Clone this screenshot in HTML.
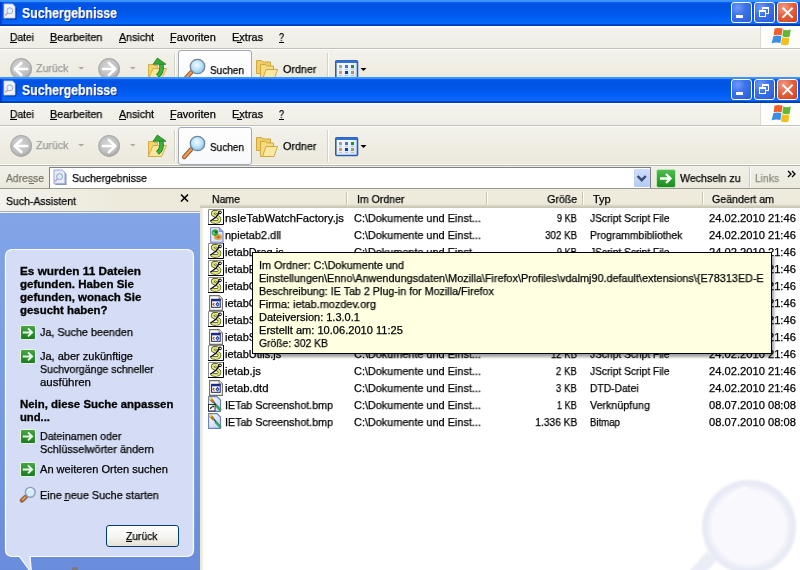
<!DOCTYPE html><html><head><meta charset="utf-8"><style>
html,body{margin:0;padding:0;width:800px;height:570px;overflow:hidden;background:#fff;position:relative}
.t{position:absolute;white-space:nowrap;font-family:"Liberation Sans",sans-serif;line-height:normal;-webkit-text-stroke:0.25px currentColor;will-change:transform}
svg{overflow:visible}
</style></head><body>
<div style="position:absolute;left:0;top:0px;width:800px;height:77px;overflow:hidden"><div style="position:absolute;left:0px;top:0px;width:800px;height:26px;background:linear-gradient(#3d95ff 0px,#3890fc 1.5px,#0a5ff0 2.5px,#0052e2 4px,#0055e6 10px,#005cf2 16px,#0564f8 21px,#0a6af8 23.5px,#0046c4 24.5px,#0038b0 26px);"></div><div style="position:absolute;left:0px;top:2px;width:3px;height:23px;background:linear-gradient(90deg,#0032c8,rgba(0,60,220,0));"></div><svg style="position:absolute;left:3px;top:3px" width="16" height="17" viewBox="0 0 16 17"><path d="M2.5 2h8.5l2.5 2.5V16.5H2.5z" fill="#001660" opacity=".55"/><path d="M1 1h8.5l2.5 2.5V15H1z" fill="#f0f2fd" stroke="#c4cbef" stroke-width=".8"/><circle cx="6.8" cy="7.8" r="3" fill="#e2f3fb" stroke="#9aa4c4" stroke-width=".9"/><path d="M4.6 10L2.2 12.6" stroke="#d4a0a0" stroke-width="1.5"/></svg><div class="t" style="left:22px;top:5px;font-size:14px;font-weight:bold;color:#fff;transform:scaleX(0.8787);transform-origin:left 0;text-shadow:1px 1px 0 #0a1e88;">Suchergebnisse</div><div style="position:absolute;left:731px;top:2px;width:21px;height:21px;box-sizing:border-box;border:1px solid #fff;border-radius:3px;background:radial-gradient(circle at 30% 25%,#6f9bf7 0,#3c72ea 40%,#2f63dd 80%,#2a56cc 100%);"></div><div style="position:absolute;left:754px;top:2px;width:21px;height:21px;box-sizing:border-box;border:1px solid #fff;border-radius:3px;background:radial-gradient(circle at 30% 25%,#6f9bf7 0,#3c72ea 40%,#2f63dd 80%,#2a56cc 100%);"></div><div style="position:absolute;left:777px;top:2px;width:21px;height:21px;box-sizing:border-box;border:1px solid #fff;border-radius:3px;background:radial-gradient(circle at 30% 25%,#f39a82 0,#e3623f 45%,#d24a26 85%,#c13b1a 100%);"></div><div style="position:absolute;left:736px;top:15px;width:7px;height:3px;background:#fff;"></div><svg style="position:absolute;left:754px;top:2px" width="21" height="21" viewBox="0 0 21 21"><g fill="#fff" shape-rendering="crispEdges"><rect x="8" y="5" width="7" height="2"/><rect x="14" y="7" width="1" height="5"/><rect x="12" y="11" width="2" height="1"/><rect x="8" y="7" width="1" height="1"/><rect x="5" y="8" width="7" height="2"/><rect x="5" y="10" width="1" height="5"/><rect x="11" y="10" width="1" height="5"/><rect x="5" y="14" width="7" height="1"/></g></svg><svg style="position:absolute;left:777px;top:2px" width="21" height="21" viewBox="0 0 21 21"><path d="M5.6 5.8l10 9.8M15.6 5.8l-10 9.8" stroke="#fff" stroke-width="1.9"/></svg><div style="position:absolute;left:0px;top:26px;width:800px;height:22px;background:linear-gradient(#ffffff 0,#ffffff 1px,#f3f2ec 2px,#efeee6);"></div><div style="position:absolute;left:0px;top:48px;width:800px;height:1px;background:#c5c3b8;"></div><div style="position:absolute;left:0px;top:49px;width:800px;height:1px;background:#fff;"></div><div style="position:absolute;left:761px;top:26px;width:39px;height:22px;background:#fdfdfb;"></div><div style="position:absolute;left:760px;top:26px;width:1px;height:22px;background:#dcdad0;"></div><div class="t" style="left:10px;top:31px;font-size:11px;color:#000;transform:scaleX(0.9343);transform-origin:left 0;">Datei</div><div style="position:absolute;left:10px;top:42px;width:7px;height:1px;background:#000;"></div><div class="t" style="left:50px;top:31px;font-size:11px;color:#000;transform:scaleX(0.9859);transform-origin:left 0;">Bearbeiten</div><div style="position:absolute;left:50px;top:42px;width:7px;height:1px;background:#000;"></div><div class="t" style="left:118.5px;top:31px;font-size:11px;color:#000;transform:scaleX(0.9697);transform-origin:left 0;">Ansicht</div><div style="position:absolute;left:118.5px;top:42px;width:7px;height:1px;background:#000;"></div><div class="t" style="left:170px;top:31px;font-size:11px;color:#000;">Favoriten</div><div style="position:absolute;left:170px;top:42px;width:6px;height:1px;background:#000;"></div><div class="t" style="left:231.5px;top:31px;font-size:11px;color:#000;transform:scaleX(0.9940);transform-origin:left 0;">Extras</div><div style="position:absolute;left:237px;top:42px;width:5px;height:1px;background:#000;"></div><div class="t" style="left:278.5px;top:31px;font-size:11px;color:#000;transform:scaleX(0.8163);transform-origin:left 0;">?</div><div style="position:absolute;left:278.5px;top:42px;width:5px;height:1px;background:#000;"></div><svg style="position:absolute;left:770px;top:27px" width="22" height="20" viewBox="0 0 22 20"><path d="M4.6 1.4 Q8.5 0.3 12.6 1.6 L11.6 8.3 Q7.5 7.1 3.6 8.3Z" fill="#f0602a"/><path d="M13.3 2.6 Q16.8 3.9 20.8 2.4 L19.6 9.8 Q15.8 11 12.3 9.3Z" fill="#62b834"/><path d="M3.4 9.2 Q7.4 7.9 11.4 9.2 L10.4 16 Q6.2 14.8 1.6 16.2Z" fill="#3b8ee6"/><path d="M12.1 10.2 Q15.6 11.6 19.4 10.5 L18.4 17.8 Q14.4 18.9 10.8 17.2Z" fill="#f2c01e"/></svg><div style="position:absolute;left:0px;top:50px;width:800px;height:38px;background:linear-gradient(#f3f2eb,#efede3 50%,#ebe9dc);"></div><div style="position:absolute;left:0px;top:87px;width:800px;height:1px;background:#fbfaf6;"></div><div style="position:absolute;left:0px;top:88px;width:800px;height:1px;background:#b6b4a6;"></div><svg style="position:absolute;left:10px;top:58px" width="23" height="23" viewBox="0 0 23 23"><defs><radialGradient id="g0" cx="45%" cy="40%" r="60%"><stop offset="0" stop-color="#d6d6d6"/><stop offset=".75" stop-color="#bdbdbd"/><stop offset="1" stop-color="#a2a2a2"/></radialGradient></defs><circle cx="11.1" cy="10.9" r="10.8" fill="url(#g0)"/><circle cx="11.1" cy="10.9" r="10.3" fill="none" stroke="#a9a9a9" stroke-width="1"/><path d="M17.2 11H5.5M11.3 5L4.8 11l6.5 6" fill="none" stroke="#fff" stroke-width="2.6" stroke-linecap="round" stroke-linejoin="round"/></svg><div class="t" style="left:36px;top:62px;font-size:11px;color:#9c9c98;transform:scaleX(0.9665);transform-origin:left 0;">Zurück</div><svg style="position:absolute;left:77px;top:66px" width="8" height="5" viewBox="0 0 8 5"><path d="M1.2 1h6L4.2 3.6z" fill="#a8a8a4"/></svg><svg style="position:absolute;left:98px;top:58px" width="23" height="23" viewBox="0 0 23 23"><defs><radialGradient id="g1000" cx="45%" cy="40%" r="60%"><stop offset="0" stop-color="#d6d6d6"/><stop offset=".75" stop-color="#bdbdbd"/><stop offset="1" stop-color="#a2a2a2"/></radialGradient></defs><circle cx="11.1" cy="10.9" r="10.8" fill="url(#g1000)"/><circle cx="11.1" cy="10.9" r="10.3" fill="none" stroke="#a9a9a9" stroke-width="1"/><path d="M5 11H16.7M10.9 5L17.4 11l-6.5 6" fill="none" stroke="#fff" stroke-width="2.6" stroke-linecap="round" stroke-linejoin="round"/></svg><svg style="position:absolute;left:129px;top:66px" width="8" height="5" viewBox="0 0 8 5"><path d="M1 1h5.5L3.8 3.6z" fill="#a8a8a4"/></svg><svg style="position:absolute;left:144px;top:53px" width="26" height="30" viewBox="0 0 26 30"><path d="M4.5 11.5h4.5l1 1h3.5v14h-9z" fill="#f2d467" stroke="#d0a845" stroke-width=".9"/><path d="M4.2 26.5L9 15.5H22.5L17.5 26.5Z" fill="#fbe79a" stroke="#d0a845" stroke-width=".9"/><path d="M17.2 11 C18.3 16 17.5 20 13.5 23" fill="none" stroke="#1f7f1f" stroke-width="4.6"/><path d="M17.2 11 C18.3 16 17.5 20 13.5 23" fill="none" stroke="#3fb23f" stroke-width="2.8"/><path d="M9 11.3L13.4 5L22 11.3Z" fill="#36a636" stroke="#1f7f1f" stroke-width=".8"/></svg><div style="position:absolute;left:174px;top:53px;width:1px;height:32px;background:#d4d2c6;"></div><div style="position:absolute;left:175px;top:53px;width:1px;height:32px;background:#fff;"></div><div style="position:absolute;left:178px;top:50px;width:74px;height:38px;box-sizing:border-box;border:1px solid #a2a9b6;border-radius:3px;background:linear-gradient(#fefefe,#f8f9fb);"></div><svg style="position:absolute;left:181px;top:57px" width="26" height="26" viewBox="0 0 26 26"><defs><radialGradient id="mg0" cx="45%" cy="40%" r="60%"><stop offset="0" stop-color="#f2fbff"/><stop offset=".6" stop-color="#b8e2f8"/><stop offset="1" stop-color="#8cc4ea"/></radialGradient></defs><path d="M10 15.5L3.2 23" stroke="#9a5a2a" stroke-width="4.4" stroke-linecap="round"/><path d="M10 15.5L3.2 23" stroke="#e9a060" stroke-width="2.2" stroke-linecap="round"/><circle cx="16.5" cy="9.5" r="7.2" fill="url(#mg0)" stroke="#6f8399" stroke-width="1.3"/></svg><div class="t" style="left:210px;top:63.599999999999994px;font-size:11px;color:#000;transform:scaleX(0.9105);transform-origin:left 0;">Suchen</div><svg style="position:absolute;left:254px;top:57px" width="26" height="26" viewBox="0 0 26 26"><path d="M2.5 3.5h5l1.5 1.5h7.5v11.5h-14z" fill="#efcf60" stroke="#caa23a" stroke-width=".9"/><path d="M6.5 7.5h5l1.5 1.5h6.5v13.5h-13z" fill="#f6dc80" stroke="#caa23a" stroke-width=".9"/><path d="M8.5 22.5L12 12.5H23.5L20 22.5Z" fill="#fbe9a2" stroke="#caa23a" stroke-width=".9"/></svg><div class="t" style="left:282.5px;top:63px;font-size:11px;color:#000;transform:scaleX(0.9781);transform-origin:left 0;">Ordner</div><div style="position:absolute;left:327px;top:53px;width:1px;height:32px;background:#d4d2c6;"></div><div style="position:absolute;left:328px;top:53px;width:1px;height:32px;background:#fff;"></div><svg style="position:absolute;left:335px;top:60px" width="24" height="20" viewBox="0 0 24 20"><defs><linearGradient id="vg0" x1="0" y1="0" x2="1" y2="1"><stop offset="0" stop-color="#ffffff"/><stop offset="1" stop-color="#cfe2fb"/></linearGradient></defs><rect x="0.8" y="0.8" width="21.7" height="17.7" rx="1" fill="url(#vg0)" stroke="#2b5cb6" stroke-width="1.6"/><rect x="0.8" y="0.5" width="21.7" height="2.5" fill="#3570d0"/><rect x="4" y="5" width="3" height="3" fill="#9aa4b0"/><rect x="10" y="5" width="3" height="3" fill="#4f74b8"/><rect x="16" y="5" width="3" height="3" fill="#2a8a3a"/><rect x="4" y="11" width="3" height="3" fill="#e0905a"/><rect x="10" y="11" width="3" height="3" fill="#1a3a8a"/><rect x="16" y="11" width="3" height="3" fill="#b09a48"/><path d="M4 9.3h3M10 9.3h3M16 9.3h3M4 15.5h3M10 15.5h3M16 15.5h3" stroke="#b0b4c4" stroke-width=".8"/></svg><svg style="position:absolute;left:360px;top:68px" width="7" height="4" viewBox="0 0 7 4"><path d="M0.5 0h6L3.5 3z" fill="#000"/></svg></div>
<div style="position:absolute;left:0;top:77px;width:800px;height:89px;overflow:hidden"><div style="position:absolute;left:0px;top:0px;width:800px;height:26px;background:linear-gradient(#3d95ff 0px,#3890fc 1.5px,#0a5ff0 2.5px,#0052e2 4px,#0055e6 10px,#005cf2 16px,#0564f8 21px,#0a6af8 23.5px,#0046c4 24.5px,#0038b0 26px);"></div><div style="position:absolute;left:0px;top:2px;width:3px;height:23px;background:linear-gradient(90deg,#0032c8,rgba(0,60,220,0));"></div><svg style="position:absolute;left:3px;top:3px" width="16" height="17" viewBox="0 0 16 17"><path d="M2.5 2h8.5l2.5 2.5V16.5H2.5z" fill="#001660" opacity=".55"/><path d="M1 1h8.5l2.5 2.5V15H1z" fill="#f0f2fd" stroke="#c4cbef" stroke-width=".8"/><circle cx="6.8" cy="7.8" r="3" fill="#e2f3fb" stroke="#9aa4c4" stroke-width=".9"/><path d="M4.6 10L2.2 12.6" stroke="#d4a0a0" stroke-width="1.5"/></svg><div class="t" style="left:22px;top:5px;font-size:14px;font-weight:bold;color:#fff;transform:scaleX(0.8787);transform-origin:left 0;text-shadow:1px 1px 0 #0a1e88;">Suchergebnisse</div><div style="position:absolute;left:731px;top:2px;width:21px;height:21px;box-sizing:border-box;border:1px solid #fff;border-radius:3px;background:radial-gradient(circle at 30% 25%,#6f9bf7 0,#3c72ea 40%,#2f63dd 80%,#2a56cc 100%);"></div><div style="position:absolute;left:754px;top:2px;width:21px;height:21px;box-sizing:border-box;border:1px solid #fff;border-radius:3px;background:radial-gradient(circle at 30% 25%,#6f9bf7 0,#3c72ea 40%,#2f63dd 80%,#2a56cc 100%);"></div><div style="position:absolute;left:777px;top:2px;width:21px;height:21px;box-sizing:border-box;border:1px solid #fff;border-radius:3px;background:radial-gradient(circle at 30% 25%,#f39a82 0,#e3623f 45%,#d24a26 85%,#c13b1a 100%);"></div><div style="position:absolute;left:736px;top:15px;width:7px;height:3px;background:#fff;"></div><svg style="position:absolute;left:754px;top:2px" width="21" height="21" viewBox="0 0 21 21"><g fill="#fff" shape-rendering="crispEdges"><rect x="8" y="5" width="7" height="2"/><rect x="14" y="7" width="1" height="5"/><rect x="12" y="11" width="2" height="1"/><rect x="8" y="7" width="1" height="1"/><rect x="5" y="8" width="7" height="2"/><rect x="5" y="10" width="1" height="5"/><rect x="11" y="10" width="1" height="5"/><rect x="5" y="14" width="7" height="1"/></g></svg><svg style="position:absolute;left:777px;top:2px" width="21" height="21" viewBox="0 0 21 21"><path d="M5.6 5.8l10 9.8M15.6 5.8l-10 9.8" stroke="#fff" stroke-width="1.9"/></svg><div style="position:absolute;left:0px;top:26px;width:800px;height:22px;background:linear-gradient(#ffffff 0,#ffffff 1px,#f3f2ec 2px,#efeee6);"></div><div style="position:absolute;left:0px;top:48px;width:800px;height:1px;background:#c5c3b8;"></div><div style="position:absolute;left:0px;top:49px;width:800px;height:1px;background:#fff;"></div><div style="position:absolute;left:761px;top:26px;width:39px;height:22px;background:#fdfdfb;"></div><div style="position:absolute;left:760px;top:26px;width:1px;height:22px;background:#dcdad0;"></div><div class="t" style="left:10px;top:31px;font-size:11px;color:#000;transform:scaleX(0.9343);transform-origin:left 0;">Datei</div><div style="position:absolute;left:10px;top:42px;width:7px;height:1px;background:#000;"></div><div class="t" style="left:50px;top:31px;font-size:11px;color:#000;transform:scaleX(0.9859);transform-origin:left 0;">Bearbeiten</div><div style="position:absolute;left:50px;top:42px;width:7px;height:1px;background:#000;"></div><div class="t" style="left:118.5px;top:31px;font-size:11px;color:#000;transform:scaleX(0.9697);transform-origin:left 0;">Ansicht</div><div style="position:absolute;left:118.5px;top:42px;width:7px;height:1px;background:#000;"></div><div class="t" style="left:170px;top:31px;font-size:11px;color:#000;">Favoriten</div><div style="position:absolute;left:170px;top:42px;width:6px;height:1px;background:#000;"></div><div class="t" style="left:231.5px;top:31px;font-size:11px;color:#000;transform:scaleX(0.9940);transform-origin:left 0;">Extras</div><div style="position:absolute;left:237px;top:42px;width:5px;height:1px;background:#000;"></div><div class="t" style="left:278.5px;top:31px;font-size:11px;color:#000;transform:scaleX(0.8163);transform-origin:left 0;">?</div><div style="position:absolute;left:278.5px;top:42px;width:5px;height:1px;background:#000;"></div><svg style="position:absolute;left:770px;top:27px" width="22" height="20" viewBox="0 0 22 20"><path d="M4.6 1.4 Q8.5 0.3 12.6 1.6 L11.6 8.3 Q7.5 7.1 3.6 8.3Z" fill="#f0602a"/><path d="M13.3 2.6 Q16.8 3.9 20.8 2.4 L19.6 9.8 Q15.8 11 12.3 9.3Z" fill="#62b834"/><path d="M3.4 9.2 Q7.4 7.9 11.4 9.2 L10.4 16 Q6.2 14.8 1.6 16.2Z" fill="#3b8ee6"/><path d="M12.1 10.2 Q15.6 11.6 19.4 10.5 L18.4 17.8 Q14.4 18.9 10.8 17.2Z" fill="#f2c01e"/></svg><div style="position:absolute;left:0px;top:50px;width:800px;height:38px;background:linear-gradient(#f3f2eb,#efede3 50%,#ebe9dc);"></div><div style="position:absolute;left:0px;top:87px;width:800px;height:1px;background:#fbfaf6;"></div><div style="position:absolute;left:0px;top:88px;width:800px;height:1px;background:#b6b4a6;"></div><svg style="position:absolute;left:10px;top:58px" width="23" height="23" viewBox="0 0 23 23"><defs><radialGradient id="g77" cx="45%" cy="40%" r="60%"><stop offset="0" stop-color="#d6d6d6"/><stop offset=".75" stop-color="#bdbdbd"/><stop offset="1" stop-color="#a2a2a2"/></radialGradient></defs><circle cx="11.1" cy="10.9" r="10.8" fill="url(#g77)"/><circle cx="11.1" cy="10.9" r="10.3" fill="none" stroke="#a9a9a9" stroke-width="1"/><path d="M17.2 11H5.5M11.3 5L4.8 11l6.5 6" fill="none" stroke="#fff" stroke-width="2.6" stroke-linecap="round" stroke-linejoin="round"/></svg><div class="t" style="left:36px;top:62px;font-size:11px;color:#9c9c98;transform:scaleX(0.9665);transform-origin:left 0;">Zurück</div><svg style="position:absolute;left:77px;top:66px" width="8" height="5" viewBox="0 0 8 5"><path d="M1.2 1h6L4.2 3.6z" fill="#a8a8a4"/></svg><svg style="position:absolute;left:98px;top:58px" width="23" height="23" viewBox="0 0 23 23"><defs><radialGradient id="g1077" cx="45%" cy="40%" r="60%"><stop offset="0" stop-color="#d6d6d6"/><stop offset=".75" stop-color="#bdbdbd"/><stop offset="1" stop-color="#a2a2a2"/></radialGradient></defs><circle cx="11.1" cy="10.9" r="10.8" fill="url(#g1077)"/><circle cx="11.1" cy="10.9" r="10.3" fill="none" stroke="#a9a9a9" stroke-width="1"/><path d="M5 11H16.7M10.9 5L17.4 11l-6.5 6" fill="none" stroke="#fff" stroke-width="2.6" stroke-linecap="round" stroke-linejoin="round"/></svg><svg style="position:absolute;left:129px;top:66px" width="8" height="5" viewBox="0 0 8 5"><path d="M1 1h5.5L3.8 3.6z" fill="#a8a8a4"/></svg><svg style="position:absolute;left:144px;top:53px" width="26" height="30" viewBox="0 0 26 30"><path d="M4.5 11.5h4.5l1 1h3.5v14h-9z" fill="#f2d467" stroke="#d0a845" stroke-width=".9"/><path d="M4.2 26.5L9 15.5H22.5L17.5 26.5Z" fill="#fbe79a" stroke="#d0a845" stroke-width=".9"/><path d="M17.2 11 C18.3 16 17.5 20 13.5 23" fill="none" stroke="#1f7f1f" stroke-width="4.6"/><path d="M17.2 11 C18.3 16 17.5 20 13.5 23" fill="none" stroke="#3fb23f" stroke-width="2.8"/><path d="M9 11.3L13.4 5L22 11.3Z" fill="#36a636" stroke="#1f7f1f" stroke-width=".8"/></svg><div style="position:absolute;left:174px;top:53px;width:1px;height:32px;background:#d4d2c6;"></div><div style="position:absolute;left:175px;top:53px;width:1px;height:32px;background:#fff;"></div><div style="position:absolute;left:178px;top:50px;width:74px;height:38px;box-sizing:border-box;border:1px solid #a2a9b6;border-radius:3px;background:linear-gradient(#fefefe,#f8f9fb);"></div><svg style="position:absolute;left:181px;top:57px" width="26" height="26" viewBox="0 0 26 26"><defs><radialGradient id="mg77" cx="45%" cy="40%" r="60%"><stop offset="0" stop-color="#f2fbff"/><stop offset=".6" stop-color="#b8e2f8"/><stop offset="1" stop-color="#8cc4ea"/></radialGradient></defs><path d="M10 15.5L3.2 23" stroke="#9a5a2a" stroke-width="4.4" stroke-linecap="round"/><path d="M10 15.5L3.2 23" stroke="#e9a060" stroke-width="2.2" stroke-linecap="round"/><circle cx="16.5" cy="9.5" r="7.2" fill="url(#mg77)" stroke="#6f8399" stroke-width="1.3"/></svg><div class="t" style="left:210px;top:63.599999999999994px;font-size:11px;color:#000;transform:scaleX(0.9105);transform-origin:left 0;">Suchen</div><svg style="position:absolute;left:254px;top:57px" width="26" height="26" viewBox="0 0 26 26"><path d="M2.5 3.5h5l1.5 1.5h7.5v11.5h-14z" fill="#efcf60" stroke="#caa23a" stroke-width=".9"/><path d="M6.5 7.5h5l1.5 1.5h6.5v13.5h-13z" fill="#f6dc80" stroke="#caa23a" stroke-width=".9"/><path d="M8.5 22.5L12 12.5H23.5L20 22.5Z" fill="#fbe9a2" stroke="#caa23a" stroke-width=".9"/></svg><div class="t" style="left:282.5px;top:63px;font-size:11px;color:#000;transform:scaleX(0.9781);transform-origin:left 0;">Ordner</div><div style="position:absolute;left:327px;top:53px;width:1px;height:32px;background:#d4d2c6;"></div><div style="position:absolute;left:328px;top:53px;width:1px;height:32px;background:#fff;"></div><svg style="position:absolute;left:335px;top:60px" width="24" height="20" viewBox="0 0 24 20"><defs><linearGradient id="vg77" x1="0" y1="0" x2="1" y2="1"><stop offset="0" stop-color="#ffffff"/><stop offset="1" stop-color="#cfe2fb"/></linearGradient></defs><rect x="0.8" y="0.8" width="21.7" height="17.7" rx="1" fill="url(#vg77)" stroke="#2b5cb6" stroke-width="1.6"/><rect x="0.8" y="0.5" width="21.7" height="2.5" fill="#3570d0"/><rect x="4" y="5" width="3" height="3" fill="#9aa4b0"/><rect x="10" y="5" width="3" height="3" fill="#4f74b8"/><rect x="16" y="5" width="3" height="3" fill="#2a8a3a"/><rect x="4" y="11" width="3" height="3" fill="#e0905a"/><rect x="10" y="11" width="3" height="3" fill="#1a3a8a"/><rect x="16" y="11" width="3" height="3" fill="#b09a48"/><path d="M4 9.3h3M10 9.3h3M16 9.3h3M4 15.5h3M10 15.5h3M16 15.5h3" stroke="#b0b4c4" stroke-width=".8"/></svg><svg style="position:absolute;left:360px;top:68px" width="7" height="4" viewBox="0 0 7 4"><path d="M0.5 0h6L3.5 3z" fill="#000"/></svg></div>
<div style="position:absolute;left:0px;top:166px;width:800px;height:23px;background:linear-gradient(#f1f0e8,#ebe9dc);"></div>
<div class="t" style="left:6px;top:172px;font-size:11px;color:#76736a;transform:scaleX(0.9412);transform-origin:left 0;">Adresse</div>
<div style="position:absolute;left:29px;top:183px;width:5px;height:1px;background:#76736a;"></div>
<div style="position:absolute;left:49px;top:167px;width:602px;height:22px;box-sizing:border-box;border:1px solid #7c7f88;background:#fff;"></div>
<svg style="position:absolute;left:53px;top:169px" width="15" height="17" viewBox="0 0 15 17"><path d="M2.5 2.2h8.3l2.7 2.7V16H2.5z" fill="#42508a" opacity=".6"/><path d="M1 1h8.3l2.7 2.7V14.8H1z" fill="#e8ecfb" stroke="#8f9ad8" stroke-width=".9"/><circle cx="6.6" cy="7.6" r="3" fill="#d8eefa" stroke="#8a96bc" stroke-width=".9"/><path d="M4.4 9.9L2 12.5" stroke="#c0a0b0" stroke-width="1.5"/></svg>
<div class="t" style="left:72px;top:172px;font-size:11px;color:#000;transform:scaleX(0.9501);transform-origin:left 0;">Suchergebnisse</div>
<div style="position:absolute;left:634px;top:169px;width:16px;height:18px;background:linear-gradient(#cdddfc,#b5cbf5);border-radius:1px;"></div>
<svg style="position:absolute;left:634px;top:169px" width="16" height="18" viewBox="0 0 16 18"><path d="M3.6 7L7.7 11.2L11.8 7" fill="none" stroke="#3d4b72" stroke-width="2.4"/></svg>
<svg style="position:absolute;left:656px;top:169px" width="20" height="19" viewBox="0 0 20 19"><defs><linearGradient id="gg" x1="0" y1="0" x2="0" y2="1"><stop offset="0" stop-color="#4fbf4f"/><stop offset="1" stop-color="#1a8a1e"/></linearGradient></defs><rect x="0.5" y="0.5" width="19" height="18" rx="2" fill="url(#gg)" stroke="#bfe6b8" stroke-width="1"/><path d="M4 9.5h10M10 5l4.5 4.5L10 14" fill="none" stroke="#fff" stroke-width="2.4"/></svg>
<div class="t" style="left:680px;top:172px;font-size:11px;color:#000;transform:scaleX(0.9634);transform-origin:left 0;">Wechseln zu</div>
<div style="position:absolute;left:749px;top:167px;width:1px;height:21px;background:#d0cdbd;"></div>
<div style="position:absolute;left:750px;top:167px;width:1px;height:21px;background:#fff;"></div>
<div class="t" style="left:755px;top:172px;font-size:11px;color:#8c8b84;transform:scaleX(0.9343);transform-origin:left 0;">Links</div>
<svg style="position:absolute;left:787px;top:170px" width="10" height="8" viewBox="0 0 10 8"><path d="M1 1l3 3-3 3M5 1l3 3-3 3" fill="none" stroke="#000" stroke-width="1.3"/></svg>
<div style="position:absolute;left:0px;top:188px;width:800px;height:1px;background:#9c9b92;"></div>
<div style="position:absolute;left:0px;top:189px;width:203px;height:22px;background:linear-gradient(90deg,#f3f2eb,#edeadc 60%);"></div>
<div class="t" style="left:6px;top:195px;font-size:11px;color:#000;transform:scaleX(0.9536);transform-origin:left 0;">Such-Assistent</div>
<svg style="position:absolute;left:179px;top:193px" width="12" height="10" viewBox="0 0 12 10"><path d="M2 1.5l7 7M9 1.5l-7 7" stroke="#000" stroke-width="1.6"/></svg>
<div style="position:absolute;left:0px;top:211px;width:200px;height:1px;background:#a7afbf;"></div>
<div style="position:absolute;left:0px;top:212px;width:200px;height:1px;background:#f4f6fb;"></div>
<div style="position:absolute;left:0px;top:213px;width:200px;height:357px;background:linear-gradient(#82a5e8,#7398e1 60%,#6a8cdc);"></div>
<div style="position:absolute;left:200px;top:189px;width:3px;height:19px;background:#edeadb;"></div>
<div style="position:absolute;left:200px;top:208px;width:3px;height:362px;background:linear-gradient(90deg,#e9e6d4,#f1f0e6);"></div>
<svg style="position:absolute;left:0px;top:240px" width="200" height="330" viewBox="0 0 200 330"><path d="M12.5 9.5 H186.5 Q193.5 9.5 193.5 16.5 V309.5 Q193.5 316.5 186.5 316.5 H30 L31.5 333 L19.5 316.5 H12.5 Q5.5 316.5 5.5 309.5 V16.5 Q5.5 9.5 12.5 9.5Z" fill="#d5ddf6" stroke="#fff" stroke-width="1.2"/></svg>
<div class="t" style="left:19.6px;top:265px;font-size:11px;font-weight:bold;color:#000;transform:scaleX(1.0692);transform-origin:left 0;-webkit-text-stroke:0.3px #000;">Es wurden 11 Dateien</div>
<div class="t" style="left:19.6px;top:278px;font-size:11px;font-weight:bold;color:#000;transform:scaleX(1.0474);transform-origin:left 0;-webkit-text-stroke:0.3px #000;">gefunden. Haben Sie</div>
<div class="t" style="left:19.6px;top:291px;font-size:11px;font-weight:bold;color:#000;transform:scaleX(1.0449);transform-origin:left 0;-webkit-text-stroke:0.3px #000;">gefunden, wonach Sie</div>
<div class="t" style="left:19.6px;top:304px;font-size:11px;font-weight:bold;color:#000;transform:scaleX(1.0382);transform-origin:left 0;-webkit-text-stroke:0.3px #000;">gesucht haben?</div>
<svg style="position:absolute;left:20px;top:325px" width="16" height="15" viewBox="0 0 16 15"><defs><linearGradient id="ga" x1="0" y1="0" x2="0" y2="1"><stop offset="0" stop-color="#4aa64a"/><stop offset="1" stop-color="#1a7a1e"/></linearGradient></defs><rect x="0.5" y="0.5" width="15" height="14" rx="1.5" fill="url(#ga)" stroke="#e8f5e0" stroke-width="1"/><path d="M2.8 7.4h8.6M8 3.4l4 4-4 4" fill="none" stroke="#eaffea" stroke-width="2"/></svg>
<div class="t" style="left:40.4px;top:326px;font-size:11px;color:#000;transform:scaleX(0.9799);transform-origin:left 0;">Ja, Suche beenden</div>
<svg style="position:absolute;left:20px;top:349px" width="16" height="15" viewBox="0 0 16 15"><defs><linearGradient id="ga" x1="0" y1="0" x2="0" y2="1"><stop offset="0" stop-color="#4aa64a"/><stop offset="1" stop-color="#1a7a1e"/></linearGradient></defs><rect x="0.5" y="0.5" width="15" height="14" rx="1.5" fill="url(#ga)" stroke="#e8f5e0" stroke-width="1"/><path d="M2.8 7.4h8.6M8 3.4l4 4-4 4" fill="none" stroke="#eaffea" stroke-width="2"/></svg>
<div class="t" style="left:40.4px;top:349.5px;font-size:11px;color:#000;">Ja, aber zukünftige</div>
<div class="t" style="left:40.4px;top:362.5px;font-size:11px;color:#000;transform:scaleX(0.9628);transform-origin:left 0;">Suchvorgänge schneller</div>
<div class="t" style="left:40.4px;top:375.5px;font-size:11px;color:#000;transform:scaleX(1.0415);transform-origin:left 0;">ausführen</div>
<div class="t" style="left:19.5px;top:398px;font-size:11px;font-weight:bold;color:#000;transform:scaleX(1.0367);transform-origin:left 0;-webkit-text-stroke:0.3px #000;">Nein, diese Suche anpassen</div>
<div class="t" style="left:19.5px;top:411px;font-size:11px;font-weight:bold;color:#000;transform:scaleX(1.0224);transform-origin:left 0;-webkit-text-stroke:0.3px #000;">und...</div>
<svg style="position:absolute;left:20px;top:429px" width="16" height="15" viewBox="0 0 16 15"><defs><linearGradient id="ga" x1="0" y1="0" x2="0" y2="1"><stop offset="0" stop-color="#4aa64a"/><stop offset="1" stop-color="#1a7a1e"/></linearGradient></defs><rect x="0.5" y="0.5" width="15" height="14" rx="1.5" fill="url(#ga)" stroke="#e8f5e0" stroke-width="1"/><path d="M2.8 7.4h8.6M8 3.4l4 4-4 4" fill="none" stroke="#eaffea" stroke-width="2"/></svg>
<div class="t" style="left:40.4px;top:430px;font-size:11px;color:#000;transform:scaleX(0.9652);transform-origin:left 0;">Dateinamen oder</div>
<div class="t" style="left:40.4px;top:443px;font-size:11px;color:#000;transform:scaleX(0.9913);transform-origin:left 0;">Schlüsselwörter ändern</div>
<svg style="position:absolute;left:20px;top:462px" width="16" height="15" viewBox="0 0 16 15"><defs><linearGradient id="ga" x1="0" y1="0" x2="0" y2="1"><stop offset="0" stop-color="#4aa64a"/><stop offset="1" stop-color="#1a7a1e"/></linearGradient></defs><rect x="0.5" y="0.5" width="15" height="14" rx="1.5" fill="url(#ga)" stroke="#e8f5e0" stroke-width="1"/><path d="M2.8 7.4h8.6M8 3.4l4 4-4 4" fill="none" stroke="#eaffea" stroke-width="2"/></svg>
<div class="t" style="left:40.4px;top:463px;font-size:11px;color:#000;transform:scaleX(1.0056);transform-origin:left 0;">An weiteren Orten suchen</div>
<svg style="position:absolute;left:18px;top:486px" width="20" height="18" viewBox="0 0 20 18"><path d="M7.6 11L4 14.4" stroke="#9a6440" stroke-width="4.6" stroke-linecap="round"/><path d="M7.2 11.2L4.6 13.8" stroke="#e0a878" stroke-width="1.6" stroke-linecap="round"/><circle cx="12.3" cy="6.3" r="4.9" fill="#d2eefa" stroke="#8a9cb4" stroke-width="1.4"/><path d="M9.6 4.6 Q11 3 13.4 3.2" fill="none" stroke="#fff" stroke-width="1"/></svg>
<div class="t" style="left:40.4px;top:488.5px;font-size:11px;color:#000;transform:scaleX(0.9868);transform-origin:left 0;">Eine neue Suche starten</div>
<div style="position:absolute;left:64px;top:500px;width:5px;height:1px;background:#000;"></div>
<div style="position:absolute;left:106px;top:525px;width:73px;height:22px;box-sizing:border-box;border:1px solid #003c74;border-radius:3px;background:linear-gradient(#ffffff,#f3f3ee 60%,#e4e2d6);"></div>
<div class="t" style="left:126px;top:529.5px;font-size:11px;color:#000;transform:scaleX(0.9368);transform-origin:left 0;">Zurück</div>
<div style="position:absolute;left:126px;top:541px;width:6px;height:1px;background:#000;"></div>
<div style="position:absolute;left:72px;top:567px;width:6px;height:3px;background:#7a7a80;border-radius:2px 2px 0 0;"></div>
<div style="position:absolute;left:200px;top:189px;width:600px;height:19px;background:linear-gradient(#efecdf 0,#edeadb 15px,#e2decd 16px,#d6d2c2 17px,#cbc7b8 18px);"></div>
<div style="position:absolute;left:346px;top:192px;width:1px;height:13px;background:#c7c5b2;"></div>
<div style="position:absolute;left:347px;top:192px;width:1px;height:13px;background:#fff;"></div>
<div style="position:absolute;left:486px;top:192px;width:1px;height:13px;background:#c7c5b2;"></div>
<div style="position:absolute;left:487px;top:192px;width:1px;height:13px;background:#fff;"></div>
<div style="position:absolute;left:582px;top:192px;width:1px;height:13px;background:#c7c5b2;"></div>
<div style="position:absolute;left:583px;top:192px;width:1px;height:13px;background:#fff;"></div>
<div style="position:absolute;left:702px;top:192px;width:1px;height:13px;background:#c7c5b2;"></div>
<div style="position:absolute;left:703px;top:192px;width:1px;height:13px;background:#fff;"></div>
<div class="t" style="left:212px;top:193px;font-size:11px;color:#000;transform:scaleX(0.9542);transform-origin:left 0;">Name</div>
<div class="t" style="left:357px;top:193px;font-size:11px;color:#000;transform:scaleX(0.9590);transform-origin:left 0;">Im Ordner</div>
<div class="t" style="right:223px;top:193px;font-size:11px;color:#000;transform:scaleX(0.9619);transform-origin:right 0;">Größe</div>
<div class="t" style="left:593px;top:193px;font-size:11px;color:#000;">Typ</div>
<div class="t" style="left:712px;top:193px;font-size:11px;color:#000;transform:scaleX(0.9650);transform-origin:left 0;">Geändert am</div>
<div style="position:absolute;left:203px;top:208px;width:597px;height:362px;background:#fff;"></div>
<div style="position:absolute;left:640px;top:440px;width:160px;height:130px;overflow:hidden"><svg width="160" height="130" style="position:absolute;left:0;top:0;filter:blur(0.8px)"><circle cx="109" cy="87" r="44" fill="#f9f9fd" stroke="#e8eaf5" stroke-width="6"/><circle cx="109" cy="87" r="39.5" fill="none" stroke="#f0f1f9" stroke-width="3"/><path d="M72 116 L50 140" stroke="#eaecf6" stroke-width="13"/><path d="M88 60 Q96 50 108 47" fill="none" stroke="#fbfcff" stroke-width="3"/></svg></div>
<svg style="position:absolute;left:208px;top:209px" width="16" height="16" viewBox="0 0 16 16"><rect x="0" y="0" width="16" height="16" fill="#fff"/><path d="M0.5 15.5V0.5H15" fill="none" stroke="#8a8a8a" stroke-width="1"/><path d="M15.5 0V15.5H0" fill="none" stroke="#000" stroke-width="1"/><path d="M10.5 3.8 C9 2.2 4.6 2.2 4.6 4.8 C4.6 7.4 11.6 6.8 11.6 10.2 C11.6 13.6 5.2 13.6 3.6 11.8" fill="none" stroke="#3a3a10" stroke-width="3.3"/><path d="M10.5 3.8 C9 2.2 4.6 2.2 4.6 4.8 C4.6 7.4 11.6 6.8 11.6 10.2 C11.6 13.6 5.2 13.6 3.6 11.8" fill="none" stroke="#dfe878" stroke-width="2.1"/><path d="M2.2 12.2 L7.6 8.6 L11.4 3.6" fill="none" stroke="#000" stroke-width="1.2"/><circle cx="12" cy="3.4" r="1.4" fill="none" stroke="#000" stroke-width="1"/></svg>
<div class="t" style="left:225.3px;top:211.5px;font-size:11px;color:#000;transform:scaleX(1.0239);transform-origin:left 0;">nsIeTabWatchFactory.js</div>
<div class="t" style="left:354px;top:211.5px;font-size:11px;color:#000;transform:scaleX(0.9883);transform-origin:left 0;">C:\Dokumente und Einst...</div>
<div class="t" style="right:223px;top:211.5px;font-size:11px;color:#000;transform:scaleX(0.8377);transform-origin:right 0;">9 KB</div>
<div class="t" style="left:590px;top:211.5px;font-size:11px;color:#000;transform:scaleX(0.9288);transform-origin:left 0;">JScript Script File</div>
<div class="t" style="left:709px;top:211.5px;font-size:11px;color:#000;transform:scaleX(1.0146);transform-origin:left 0;">24.02.2010 21:46</div>
<svg style="position:absolute;left:210px;top:227px" width="14" height="16" viewBox="0 0 14 16"><defs><linearGradient id="dg" x1="0" y1="0" x2="1" y2="1"><stop offset="0" stop-color="#ffffff"/><stop offset="1" stop-color="#c8d8f8"/></linearGradient></defs><path d="M0.7 0.7h8.5l3.8 3.8v10.8H0.7z" fill="url(#dg)" stroke="#7a82c8" stroke-width="1.1"/><path d="M9.2 0.7v3.8h3.8" fill="#9ab0e0" stroke="#7a82c8" stroke-width=".8"/><ellipse cx="8" cy="10" rx="4" ry="3" fill="#e2a04a"/><ellipse cx="8.2" cy="10.2" rx="1.6" ry="1.1" fill="#b07028"/><circle cx="5" cy="5.6" r="3.3" fill="#3aa84a"/><circle cx="6" cy="5" r="1.5" fill="#1a7028"/><circle cx="3.8" cy="6.2" r="1.1" fill="#7fd07f"/></svg>
<div class="t" style="left:225.3px;top:228.5px;font-size:11px;color:#000;transform:scaleX(0.9945);transform-origin:left 0;">npietab2.dll</div>
<div class="t" style="left:354px;top:228.5px;font-size:11px;color:#000;transform:scaleX(0.9883);transform-origin:left 0;">C:\Dokumente und Einst...</div>
<div class="t" style="right:223px;top:228.5px;font-size:11px;color:#000;transform:scaleX(0.8858);transform-origin:right 0;">302 KB</div>
<div class="t" style="left:590px;top:228.5px;font-size:11px;color:#000;transform:scaleX(0.9444);transform-origin:left 0;">Programmbibliothek</div>
<div class="t" style="left:709px;top:228.5px;font-size:11px;color:#000;transform:scaleX(1.0146);transform-origin:left 0;">24.02.2010 21:46</div>
<svg style="position:absolute;left:208px;top:243px" width="16" height="16" viewBox="0 0 16 16"><rect x="0" y="0" width="16" height="16" fill="#fff"/><path d="M0.5 15.5V0.5H15" fill="none" stroke="#8a8a8a" stroke-width="1"/><path d="M15.5 0V15.5H0" fill="none" stroke="#000" stroke-width="1"/><path d="M10.5 3.8 C9 2.2 4.6 2.2 4.6 4.8 C4.6 7.4 11.6 6.8 11.6 10.2 C11.6 13.6 5.2 13.6 3.6 11.8" fill="none" stroke="#3a3a10" stroke-width="3.3"/><path d="M10.5 3.8 C9 2.2 4.6 2.2 4.6 4.8 C4.6 7.4 11.6 6.8 11.6 10.2 C11.6 13.6 5.2 13.6 3.6 11.8" fill="none" stroke="#dfe878" stroke-width="2.1"/><path d="M2.2 12.2 L7.6 8.6 L11.4 3.6" fill="none" stroke="#000" stroke-width="1.2"/><circle cx="12" cy="3.4" r="1.4" fill="none" stroke="#000" stroke-width="1"/></svg>
<div class="t" style="left:225.3px;top:245.5px;font-size:11px;color:#000;">ietabDrag.js</div>
<div class="t" style="left:354px;top:245.5px;font-size:11px;color:#000;transform:scaleX(0.9883);transform-origin:left 0;">C:\Dokumente und Einst...</div>
<div class="t" style="right:223px;top:245.5px;font-size:11px;color:#000;transform:scaleX(0.8377);transform-origin:right 0;">9 KB</div>
<div class="t" style="left:590px;top:245.5px;font-size:11px;color:#000;transform:scaleX(0.9288);transform-origin:left 0;">JScript Script File</div>
<div class="t" style="left:709px;top:245.5px;font-size:11px;color:#000;transform:scaleX(1.0146);transform-origin:left 0;">24.02.2010 21:46</div>
<svg style="position:absolute;left:208px;top:260px" width="16" height="16" viewBox="0 0 16 16"><rect x="0" y="0" width="16" height="16" fill="#fff"/><path d="M0.5 15.5V0.5H15" fill="none" stroke="#8a8a8a" stroke-width="1"/><path d="M15.5 0V15.5H0" fill="none" stroke="#000" stroke-width="1"/><path d="M10.5 3.8 C9 2.2 4.6 2.2 4.6 4.8 C4.6 7.4 11.6 6.8 11.6 10.2 C11.6 13.6 5.2 13.6 3.6 11.8" fill="none" stroke="#3a3a10" stroke-width="3.3"/><path d="M10.5 3.8 C9 2.2 4.6 2.2 4.6 4.8 C4.6 7.4 11.6 6.8 11.6 10.2 C11.6 13.6 5.2 13.6 3.6 11.8" fill="none" stroke="#dfe878" stroke-width="2.1"/><path d="M2.2 12.2 L7.6 8.6 L11.4 3.6" fill="none" stroke="#000" stroke-width="1.2"/><circle cx="12" cy="3.4" r="1.4" fill="none" stroke="#000" stroke-width="1"/></svg>
<div class="t" style="left:225.3px;top:262.5px;font-size:11px;color:#000;">ietabE.js</div>
<div class="t" style="left:354px;top:262.5px;font-size:11px;color:#000;transform:scaleX(0.9883);transform-origin:left 0;">C:\Dokumente und Einst...</div>
<div class="t" style="right:223px;top:262.5px;font-size:11px;color:#000;transform:scaleX(0.8377);transform-origin:right 0;">9 KB</div>
<div class="t" style="left:590px;top:262.5px;font-size:11px;color:#000;transform:scaleX(0.9288);transform-origin:left 0;">JScript Script File</div>
<div class="t" style="left:709px;top:262.5px;font-size:11px;color:#000;transform:scaleX(1.0146);transform-origin:left 0;">24.02.2010 21:46</div>
<svg style="position:absolute;left:208px;top:277px" width="16" height="16" viewBox="0 0 16 16"><rect x="0" y="0" width="16" height="16" fill="#fff"/><path d="M0.5 15.5V0.5H15" fill="none" stroke="#8a8a8a" stroke-width="1"/><path d="M15.5 0V15.5H0" fill="none" stroke="#000" stroke-width="1"/><path d="M10.5 3.8 C9 2.2 4.6 2.2 4.6 4.8 C4.6 7.4 11.6 6.8 11.6 10.2 C11.6 13.6 5.2 13.6 3.6 11.8" fill="none" stroke="#3a3a10" stroke-width="3.3"/><path d="M10.5 3.8 C9 2.2 4.6 2.2 4.6 4.8 C4.6 7.4 11.6 6.8 11.6 10.2 C11.6 13.6 5.2 13.6 3.6 11.8" fill="none" stroke="#dfe878" stroke-width="2.1"/><path d="M2.2 12.2 L7.6 8.6 L11.4 3.6" fill="none" stroke="#000" stroke-width="1.2"/><circle cx="12" cy="3.4" r="1.4" fill="none" stroke="#000" stroke-width="1"/></svg>
<div class="t" style="left:225.3px;top:279.5px;font-size:11px;color:#000;">ietabC.js</div>
<div class="t" style="left:354px;top:279.5px;font-size:11px;color:#000;transform:scaleX(0.9883);transform-origin:left 0;">C:\Dokumente und Einst...</div>
<div class="t" style="right:223px;top:279.5px;font-size:11px;color:#000;transform:scaleX(0.8377);transform-origin:right 0;">9 KB</div>
<div class="t" style="left:590px;top:279.5px;font-size:11px;color:#000;transform:scaleX(0.9288);transform-origin:left 0;">JScript Script File</div>
<div class="t" style="left:709px;top:279.5px;font-size:11px;color:#000;transform:scaleX(1.0146);transform-origin:left 0;">24.02.2010 21:46</div>
<svg style="position:absolute;left:209px;top:295px" width="14" height="16" viewBox="0 0 14 16"><path d="M0.6 0.6h9.5l3.3 3.3v11.5H0.6z" fill="#fffff8" stroke="#6e6e6e" stroke-width="1.1"/><path d="M10.1 0.6v3.3h3.3" fill="#e8e8e8" stroke="#6e6e6e" stroke-width=".8"/><rect x="2.6" y="4.3" width="8.6" height="8" fill="#fff" stroke="#1a2060" stroke-width="1"/><rect x="2.6" y="4" width="8.6" height="2.3" fill="#1e2a8a"/><path d="M5.5 7.8L4 9.2l1.5 1.4" fill="none" stroke="#9a4a20" stroke-width="1.1"/><path d="M8.5 7.6l1.4 1.6-1.4 1.6-1.4-1.6z" fill="none" stroke="#1f48a8" stroke-width="1.1"/></svg>
<div class="t" style="left:225.3px;top:296.5px;font-size:11px;color:#000;">ietabO.xul</div>
<div class="t" style="left:354px;top:296.5px;font-size:11px;color:#000;transform:scaleX(0.9883);transform-origin:left 0;">C:\Dokumente und Einst...</div>
<div class="t" style="right:223px;top:296.5px;font-size:11px;color:#000;transform:scaleX(0.8377);transform-origin:right 0;">9 KB</div>
<div class="t" style="left:590px;top:296.5px;font-size:11px;color:#000;">XUL-Datei</div>
<div class="t" style="left:709px;top:296.5px;font-size:11px;color:#000;transform:scaleX(1.0146);transform-origin:left 0;">24.02.2010 21:46</div>
<svg style="position:absolute;left:208px;top:311px" width="16" height="16" viewBox="0 0 16 16"><rect x="0" y="0" width="16" height="16" fill="#fff"/><path d="M0.5 15.5V0.5H15" fill="none" stroke="#8a8a8a" stroke-width="1"/><path d="M15.5 0V15.5H0" fill="none" stroke="#000" stroke-width="1"/><path d="M10.5 3.8 C9 2.2 4.6 2.2 4.6 4.8 C4.6 7.4 11.6 6.8 11.6 10.2 C11.6 13.6 5.2 13.6 3.6 11.8" fill="none" stroke="#3a3a10" stroke-width="3.3"/><path d="M10.5 3.8 C9 2.2 4.6 2.2 4.6 4.8 C4.6 7.4 11.6 6.8 11.6 10.2 C11.6 13.6 5.2 13.6 3.6 11.8" fill="none" stroke="#dfe878" stroke-width="2.1"/><path d="M2.2 12.2 L7.6 8.6 L11.4 3.6" fill="none" stroke="#000" stroke-width="1.2"/><circle cx="12" cy="3.4" r="1.4" fill="none" stroke="#000" stroke-width="1"/></svg>
<div class="t" style="left:225.3px;top:313.5px;font-size:11px;color:#000;">ietabS.js</div>
<div class="t" style="left:354px;top:313.5px;font-size:11px;color:#000;transform:scaleX(0.9883);transform-origin:left 0;">C:\Dokumente und Einst...</div>
<div class="t" style="right:223px;top:313.5px;font-size:11px;color:#000;transform:scaleX(0.8377);transform-origin:right 0;">9 KB</div>
<div class="t" style="left:590px;top:313.5px;font-size:11px;color:#000;transform:scaleX(0.9288);transform-origin:left 0;">JScript Script File</div>
<div class="t" style="left:709px;top:313.5px;font-size:11px;color:#000;transform:scaleX(1.0146);transform-origin:left 0;">24.02.2010 21:46</div>
<svg style="position:absolute;left:209px;top:329px" width="14" height="16" viewBox="0 0 14 16"><path d="M0.6 0.6h9.5l3.3 3.3v11.5H0.6z" fill="#fffff8" stroke="#6e6e6e" stroke-width="1.1"/><path d="M10.1 0.6v3.3h3.3" fill="#e8e8e8" stroke="#6e6e6e" stroke-width=".8"/><rect x="2.6" y="4.3" width="8.6" height="8" fill="#fff" stroke="#1a2060" stroke-width="1"/><rect x="2.6" y="4" width="8.6" height="2.3" fill="#1e2a8a"/><path d="M5.5 7.8L4 9.2l1.5 1.4" fill="none" stroke="#9a4a20" stroke-width="1.1"/><path d="M8.5 7.6l1.4 1.6-1.4 1.6-1.4-1.6z" fill="none" stroke="#1f48a8" stroke-width="1.1"/></svg>
<div class="t" style="left:225.3px;top:330.5px;font-size:11px;color:#000;">ietabS.xul</div>
<div class="t" style="left:354px;top:330.5px;font-size:11px;color:#000;transform:scaleX(0.9883);transform-origin:left 0;">C:\Dokumente und Einst...</div>
<div class="t" style="right:223px;top:330.5px;font-size:11px;color:#000;transform:scaleX(0.8377);transform-origin:right 0;">9 KB</div>
<div class="t" style="left:590px;top:330.5px;font-size:11px;color:#000;">XUL-Datei</div>
<div class="t" style="left:709px;top:330.5px;font-size:11px;color:#000;transform:scaleX(1.0146);transform-origin:left 0;">24.02.2010 21:46</div>
<svg style="position:absolute;left:208px;top:345px" width="16" height="16" viewBox="0 0 16 16"><rect x="0" y="0" width="16" height="16" fill="#fff"/><path d="M0.5 15.5V0.5H15" fill="none" stroke="#8a8a8a" stroke-width="1"/><path d="M15.5 0V15.5H0" fill="none" stroke="#000" stroke-width="1"/><path d="M10.5 3.8 C9 2.2 4.6 2.2 4.6 4.8 C4.6 7.4 11.6 6.8 11.6 10.2 C11.6 13.6 5.2 13.6 3.6 11.8" fill="none" stroke="#3a3a10" stroke-width="3.3"/><path d="M10.5 3.8 C9 2.2 4.6 2.2 4.6 4.8 C4.6 7.4 11.6 6.8 11.6 10.2 C11.6 13.6 5.2 13.6 3.6 11.8" fill="none" stroke="#dfe878" stroke-width="2.1"/><path d="M2.2 12.2 L7.6 8.6 L11.4 3.6" fill="none" stroke="#000" stroke-width="1.2"/><circle cx="12" cy="3.4" r="1.4" fill="none" stroke="#000" stroke-width="1"/></svg>
<div class="t" style="left:225.3px;top:347.5px;font-size:11px;color:#000;">ietabUtils.js</div>
<div class="t" style="left:354px;top:347.5px;font-size:11px;color:#000;transform:scaleX(0.9883);transform-origin:left 0;">C:\Dokumente und Einst...</div>
<div class="t" style="right:223px;top:347.5px;font-size:11px;color:#000;transform:scaleX(0.8667);transform-origin:right 0;">12 KB</div>
<div class="t" style="left:590px;top:347.5px;font-size:11px;color:#000;transform:scaleX(0.9288);transform-origin:left 0;">JScript Script File</div>
<div class="t" style="left:709px;top:347.5px;font-size:11px;color:#000;transform:scaleX(1.0146);transform-origin:left 0;">24.02.2010 21:46</div>
<svg style="position:absolute;left:208px;top:362px" width="16" height="16" viewBox="0 0 16 16"><rect x="0" y="0" width="16" height="16" fill="#fff"/><path d="M0.5 15.5V0.5H15" fill="none" stroke="#8a8a8a" stroke-width="1"/><path d="M15.5 0V15.5H0" fill="none" stroke="#000" stroke-width="1"/><path d="M10.5 3.8 C9 2.2 4.6 2.2 4.6 4.8 C4.6 7.4 11.6 6.8 11.6 10.2 C11.6 13.6 5.2 13.6 3.6 11.8" fill="none" stroke="#3a3a10" stroke-width="3.3"/><path d="M10.5 3.8 C9 2.2 4.6 2.2 4.6 4.8 C4.6 7.4 11.6 6.8 11.6 10.2 C11.6 13.6 5.2 13.6 3.6 11.8" fill="none" stroke="#dfe878" stroke-width="2.1"/><path d="M2.2 12.2 L7.6 8.6 L11.4 3.6" fill="none" stroke="#000" stroke-width="1.2"/><circle cx="12" cy="3.4" r="1.4" fill="none" stroke="#000" stroke-width="1"/></svg>
<div class="t" style="left:225.3px;top:364.5px;font-size:11px;color:#000;transform:scaleX(1.0323);transform-origin:left 0;">ietab.js</div>
<div class="t" style="left:354px;top:364.5px;font-size:11px;color:#000;transform:scaleX(0.9883);transform-origin:left 0;">C:\Dokumente und Einst...</div>
<div class="t" style="right:223px;top:364.5px;font-size:11px;color:#000;transform:scaleX(0.8796);transform-origin:right 0;">2 KB</div>
<div class="t" style="left:590px;top:364.5px;font-size:11px;color:#000;transform:scaleX(0.9288);transform-origin:left 0;">JScript Script File</div>
<div class="t" style="left:709px;top:364.5px;font-size:11px;color:#000;transform:scaleX(1.0146);transform-origin:left 0;">24.02.2010 21:46</div>
<svg style="position:absolute;left:209px;top:380px" width="14" height="16" viewBox="0 0 14 16"><path d="M0.6 0.6h9.5l3.3 3.3v11.5H0.6z" fill="#fffff8" stroke="#6e6e6e" stroke-width="1.1"/><path d="M10.1 0.6v3.3h3.3" fill="#e8e8e8" stroke="#6e6e6e" stroke-width=".8"/><rect x="2.6" y="4.3" width="8.6" height="8" fill="#fff" stroke="#1a2060" stroke-width="1"/><rect x="2.6" y="4" width="8.6" height="2.3" fill="#1e2a8a"/><path d="M5.5 7.8L4 9.2l1.5 1.4" fill="none" stroke="#9a4a20" stroke-width="1.1"/><path d="M8.5 7.6l1.4 1.6-1.4 1.6-1.4-1.6z" fill="none" stroke="#1f48a8" stroke-width="1.1"/></svg>
<div class="t" style="left:225.3px;top:381.5px;font-size:11px;color:#000;transform:scaleX(1.0296);transform-origin:left 0;">ietab.dtd</div>
<div class="t" style="left:354px;top:381.5px;font-size:11px;color:#000;transform:scaleX(0.9883);transform-origin:left 0;">C:\Dokumente und Einst...</div>
<div class="t" style="right:223px;top:381.5px;font-size:11px;color:#000;transform:scaleX(0.8796);transform-origin:right 0;">3 KB</div>
<div class="t" style="left:590px;top:381.5px;font-size:11px;color:#000;transform:scaleX(0.9338);transform-origin:left 0;">DTD-Datei</div>
<div class="t" style="left:709px;top:381.5px;font-size:11px;color:#000;transform:scaleX(1.0146);transform-origin:left 0;">24.02.2010 21:46</div>
<svg style="position:absolute;left:208px;top:396px" width="14" height="16" viewBox="0 0 14 16"><defs><linearGradient id="bglnk" x1="0" y1="0" x2="1" y2="1"><stop offset="0" stop-color="#ffffff"/><stop offset="1" stop-color="#b8d0f0"/></linearGradient></defs><path d="M0.6 0.6h8.5l3.4 3.4v11.4H0.6z" fill="url(#bglnk)" stroke="#6a80b8" stroke-width="1.1"/><path d="M5.5 6L12.5 14" stroke="#1f5a7a" stroke-width="1.6"/><path d="M7.5 9L12.8 14.5" stroke="#3aa060" stroke-width="2.4"/><path d="M2 2.4L5.6 6.2" stroke="#b07a28" stroke-width="3"/><path d="M1.6 1.8l1.8 1.8" stroke="#f4d650" stroke-width="2.4"/><rect x="0.5" y="8.5" width="6.5" height="6.5" fill="#fff" stroke="#222" stroke-width=".9"/><path d="M2.6 13Q2.6 11 4.6 10.8" fill="none" stroke="#000" stroke-width="1.1"/><path d="M3.8 9.8h2v2z" fill="#000"/></svg>
<div class="t" style="left:225.3px;top:398.5px;font-size:11px;color:#000;transform:scaleX(0.9697);transform-origin:left 0;">IETab Screenshot.bmp</div>
<div class="t" style="left:354px;top:398.5px;font-size:11px;color:#000;transform:scaleX(0.9883);transform-origin:left 0;">C:\Dokumente und Einst...</div>
<div class="t" style="right:223px;top:398.5px;font-size:11px;color:#000;transform:scaleX(0.8377);transform-origin:right 0;">1 KB</div>
<div class="t" style="left:590px;top:398.5px;font-size:11px;color:#000;transform:scaleX(0.9704);transform-origin:left 0;">Verknüpfung</div>
<div class="t" style="left:709px;top:398.5px;font-size:11px;color:#000;transform:scaleX(1.0146);transform-origin:left 0;">08.07.2010 08:08</div>
<svg style="position:absolute;left:208px;top:413px" width="14" height="16" viewBox="0 0 14 16"><defs><linearGradient id="bgbmp" x1="0" y1="0" x2="1" y2="1"><stop offset="0" stop-color="#ffffff"/><stop offset="1" stop-color="#b8d0f0"/></linearGradient></defs><path d="M0.6 0.6h8.5l3.4 3.4v11.4H0.6z" fill="url(#bgbmp)" stroke="#6a80b8" stroke-width="1.1"/><path d="M5.5 6L12.5 14" stroke="#1f5a7a" stroke-width="1.6"/><path d="M7.5 9L12.8 14.5" stroke="#3aa060" stroke-width="2.4"/><path d="M2 2.4L5.6 6.2" stroke="#b07a28" stroke-width="3"/><path d="M1.6 1.8l1.8 1.8" stroke="#f4d650" stroke-width="2.4"/></svg>
<div class="t" style="left:225.3px;top:415.5px;font-size:11px;color:#000;transform:scaleX(0.9697);transform-origin:left 0;">IETab Screenshot.bmp</div>
<div class="t" style="left:354px;top:415.5px;font-size:11px;color:#000;transform:scaleX(0.9883);transform-origin:left 0;">C:\Dokumente und Einst...</div>
<div class="t" style="right:223px;top:415.5px;font-size:11px;color:#000;transform:scaleX(0.9269);transform-origin:right 0;">1.336 KB</div>
<div class="t" style="left:590px;top:415.5px;font-size:11px;color:#000;transform:scaleX(0.8759);transform-origin:left 0;">Bitmap</div>
<div class="t" style="left:709px;top:415.5px;font-size:11px;color:#000;transform:scaleX(1.0146);transform-origin:left 0;">08.07.2010 08:08</div>
<div style="position:absolute;left:255px;top:256px;width:519px;height:101px;background:rgba(0,0,0,.38);filter:blur(1.5px);"></div>
<div style="position:absolute;left:252px;top:252px;width:520px;height:102px;box-sizing:border-box;border:1px solid #000;background:#ffffe1;"></div>
<div class="t" style="left:258.5px;top:259px;font-size:11px;color:#000;transform:scaleX(0.9835);transform-origin:left 0;">Im Ordner: C:\Dokumente und</div>
<div class="t" style="left:258.5px;top:272px;font-size:11px;color:#000;transform:scaleX(0.9849);transform-origin:left 0;">Einstellungen\Enno\Anwendungsdaten\Mozilla\Firefox\Profiles\vdalmj90.default\extensions\{E78313ED-E</div>
<div class="t" style="left:258.5px;top:285px;font-size:11px;color:#000;transform:scaleX(0.9758);transform-origin:left 0;">Beschreibung: IE Tab 2 Plug-in for Mozilla/Firefox</div>
<div class="t" style="left:258.5px;top:298px;font-size:11px;color:#000;transform:scaleX(0.9928);transform-origin:left 0;">Firma: ietab.mozdev.org</div>
<div class="t" style="left:258.5px;top:311px;font-size:11px;color:#000;">Dateiversion: 1.3.0.1</div>
<div class="t" style="left:258.5px;top:324px;font-size:11px;color:#000;transform:scaleX(1.0068);transform-origin:left 0;">Erstellt am: 10.06.2010 11:25</div>
<div class="t" style="left:258.5px;top:337px;font-size:11px;color:#000;transform:scaleX(0.9396);transform-origin:left 0;">Größe: 302 KB</div>
</body></html>
